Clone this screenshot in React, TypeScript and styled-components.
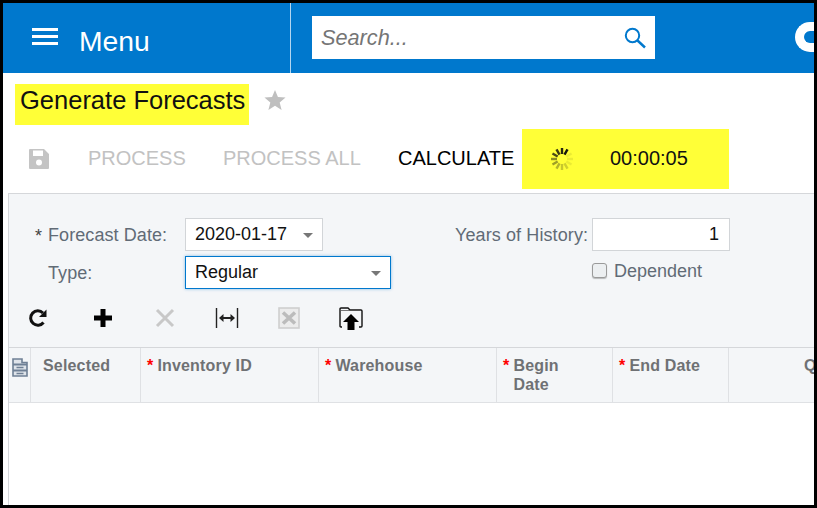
import styled, { createGlobalStyle } from "styled-components";

const GlobalStyle = createGlobalStyle`
  html, body {
    margin: 0;
    padding: 0;
    background: #000;
  }
  * {
    box-sizing: border-box;
  }
`;

const spinnerTicks = Array.from({ length: 12 }, (_, i) => i);

const App = () => {
  return (
    <Style.Frame>
      <GlobalStyle />
      <Style.Header>
        <Style.MenuSection>
          <Style.Burger>
            <span />
            <span />
            <span />
          </Style.Burger>
          <Style.MenuText>Menu</Style.MenuText>
        </Style.MenuSection>
        <Style.SearchSection>
          <Style.SearchBox>
            <Style.SearchText>Search...</Style.SearchText>
            <svg width="22" height="22" viewBox="0 0 22 22" fill="none">
              <circle cx="8.5" cy="8.5" r="6.7" stroke="#0078cd" strokeWidth="2" />
              <path d="M13.5 13.5L21 20.5" stroke="#0078cd" strokeWidth="2.4" />
            </svg>
          </Style.SearchBox>
        </Style.SearchSection>
        <Style.Logo />
      </Style.Header>

      <Style.TitleRow>
        <Style.Title>Generate Forecasts</Style.Title>
        <Style.Star width="22" height="22" viewBox="0 0 24 23">
          <path
            d="M12 0.5L15.2 8.2L23.5 8.8L17.1 14.1L19.2 22.3L12 17.8L4.8 22.3L6.9 14.1L0.5 8.8L8.8 8.2Z"
            fill="#bfbfbf"
          />
        </Style.Star>
      </Style.TitleRow>

      <Style.ActionBar>
        <Style.SaveSlot>
          <svg width="20" height="20" viewBox="0 0 20 20">
            <path
              fillRule="evenodd"
              d="M1 0H15L20 5V19Q20 20 19 20H1Q0 20 0 19V1Q0 0 1 0ZM4 1.5V7H14V1.5ZM10 10.5A3 3 0 1 0 10 16.5A3 3 0 1 0 10 10.5Z"
              fill="#c4c4c4"
            />
          </svg>
        </Style.SaveSlot>
        <Style.ActionText $disabled $width={135}>PROCESS</Style.ActionText>
        <Style.ActionText $disabled $width={175}>PROCESS ALL</Style.ActionText>
        <Style.ActionText $width={124}>CALCULATE</Style.ActionText>
        <Style.TimerBox>
          <svg width="26" height="26" viewBox="0 0 26 26">
            {spinnerTicks.map((i) => (
              <line
                key={i}
                x1="13"
                y1="2"
                x2="13"
                y2="8"
                stroke={i > 3 && i < 8 ? "#55551a" : "#14140c"}
                strokeWidth="2.4"
                opacity={i < 4 ? 1 - i * 0.08 : Math.max(0.08, 0.8 - (i - 3) * 0.12)}
                transform={`rotate(${30 - i * 30} 13 13)`}
              />
            ))}
          </svg>
          <Style.Timer>00:00:05</Style.Timer>
        </Style.TimerBox>
      </Style.ActionBar>

      <Style.Panel>
        <Style.Form>
          <Style.FormLeft>
            <Style.FieldRow>
              <Style.Label $required>Forecast Date:</Style.Label>
              <Style.Select $width={138}>
                <span>2020-01-17</span>
                <Style.Caret />
              </Style.Select>
            </Style.FieldRow>
            <Style.FieldRow>
              <Style.Label>Type:</Style.Label>
              <Style.Select $width={206} $focused>
                <span>Regular</span>
                <Style.Caret />
              </Style.Select>
            </Style.FieldRow>
          </Style.FormLeft>
          <Style.FormRight>
            <Style.FieldRow>
              <Style.RightLabel>Years of History:</Style.RightLabel>
              <Style.NumberInput>1</Style.NumberInput>
            </Style.FieldRow>
            <Style.CheckRow>
              <Style.CheckBox />
              <Style.CheckLabel>Dependent</Style.CheckLabel>
            </Style.CheckRow>
          </Style.FormRight>
        </Style.Form>

        <Style.GridToolbar>
          <Style.ToolButton>
            <svg width="22" height="22" viewBox="0 0 22 22" fill="none" style={{ marginLeft: -6 }}>
              <path
                d="M16.5 15.5A7.2 7.2 0 1 1 16 6"
                stroke="#111"
                strokeWidth="3"
              />
              <path d="M19.5 2.5V10H12Z" fill="#111" />
            </svg>
          </Style.ToolButton>
          <Style.ToolButton>
            <svg width="18" height="18" viewBox="0 0 18 18">
              <path d="M6.5 0H11.5V6.5H18V11.5H11.5V18H6.5V11.5H0V6.5H6.5Z" fill="#000" />
            </svg>
          </Style.ToolButton>
          <Style.ToolButton>
            <svg width="20" height="20" viewBox="0 0 20 20">
              <path d="M2 2L18 18M18 2L2 18" stroke="#c8c8c8" strokeWidth="3" />
            </svg>
          </Style.ToolButton>
          <Style.ToolButton>
            <svg width="24" height="20" viewBox="0 0 24 20" fill="none">
              <path d="M1.5 0V20M22.5 0V20" stroke="#222" strokeWidth="1.4" />
              <path d="M7 10H17" stroke="#222" strokeWidth="2" />
              <path d="M4 10L8.5 6V14ZM20 10L15.5 6V14Z" fill="#222" />
            </svg>
          </Style.ToolButton>
          <Style.ToolButton>
            <svg width="22" height="22" viewBox="0 0 22 22" fill="none">
              <rect x="1" y="1" width="20" height="20" fill="#ececec" stroke="#cfcfcf" strokeWidth="1.6" />
              <path d="M5 5.5L17 16.5M17 5.5L5 16.5" stroke="#bcbcbc" strokeWidth="3.6" />
            </svg>
          </Style.ToolButton>
          <Style.ToolButton>
            <svg width="24" height="25" viewBox="0 0 24 25" fill="none">
              <path
                d="M3 21H2Q1 21 1 20V3Q1 2 2 2H9L11 4H22Q23 4 23 5V20Q23 21 22 21H20"
                stroke="#111"
                strokeWidth="1.4"
              />
              <path d="M2 4.5H22" stroke="#555" strokeWidth="0.8" />
              <path d="M12 8L20 16H15.5V24H8.5V16H4Z" fill="#000" />
            </svg>
          </Style.ToolButton>
        </Style.GridToolbar>

        <Style.GridHeader>
          <Style.IconCell>
            <svg width="16" height="19" viewBox="0 0 16 19" fill="none">
              <path d="M1 1H10V4.5H15V18H1Z" fill="#dfe4ea" stroke="#6f8095" strokeWidth="1.6" />
              <path d="M1 6.5H15M1 12.5H15" stroke="#6f8095" strokeWidth="2" />
              <path d="M4.5 9.5H11.5M4.5 15.5H11.5" stroke="#6f8095" strokeWidth="1.4" />
            </svg>
          </Style.IconCell>
          <Style.HeaderCell $width={110}>
            <Style.PlainHeading>Selected</Style.PlainHeading>
          </Style.HeaderCell>
          <Style.HeaderCell $width={178}>
            <Style.RequiredMark>*</Style.RequiredMark>
            <span>Inventory ID</span>
          </Style.HeaderCell>
          <Style.HeaderCell $width={178}>
            <Style.RequiredMark>*</Style.RequiredMark>
            <span>Warehouse</span>
          </Style.HeaderCell>
          <Style.HeaderCell $width={116}>
            <Style.RequiredMark>*</Style.RequiredMark>
            <span>
              Begin
              <br />
              Date
            </span>
          </Style.HeaderCell>
          <Style.HeaderCell $width={116}>
            <Style.RequiredMark>*</Style.RequiredMark>
            <span>End Date</span>
          </Style.HeaderCell>
          <Style.LastHeaderCell>Q</Style.LastHeaderCell>
        </Style.GridHeader>
      </Style.Panel>
    </Style.Frame>
  );
};

export default App;

const FONT = `"Liberation Sans", Arial, sans-serif`;

const Style = {
  Frame: styled.div`
    width: 817px;
    height: 508px;
    border: 3px solid #000;
    background: #fff;
    overflow: hidden;
    font-family: ${FONT};
  `,
  Header: styled.header`
    display: flex;
    height: 70px;
    background: #0078cd;
  `,
  MenuSection: styled.div`
    display: flex;
    align-items: center;
    gap: 21px;
    width: 288px;
    padding: 0 0 0 29px;
    border-right: 1px solid #b3d6f0;
  `,
  Burger: styled.div`
    display: flex;
    flex-direction: column;
    gap: 4px;
    width: 26px;
    margin-top: -3px;

    span {
      display: block;
      height: 3px;
      background: #fff;
    }
  `,
  MenuText: styled.div`
    color: #fff;
    font-size: 28.3px;
    line-height: 32px;
    margin-top: 6px;
  `,
  SearchSection: styled.div`
    flex: 1;
    padding: 13px 0 0 21px;
  `,
  SearchBox: styled.div`
    display: flex;
    align-items: center;
    justify-content: space-between;
    width: 343px;
    height: 43px;
    padding: 0 9px 0 9px;
    background: #fff;
  `,
  SearchText: styled.span`
    color: #757575;
    font-size: 21.7px;
    font-style: italic;
  `,
  Logo: styled.div`
    flex-shrink: 0;
    width: 19px;
    height: 30px;
    margin-top: 19px;
    border: 9px solid #fff;
    border-right: 0;
    border-radius: 15px 0 0 15px;
  `,
  TitleRow: styled.div`
    display: flex;
    align-items: center;
    gap: 15px;
    height: 56px;
    padding: 0 0 0 12px;
  `,
  Title: styled.h1`
    display: flex;
    align-items: center;
    width: 234px;
    height: 41px;
    margin: 7px 0 0;
    padding: 0 0 8px 5px;
    background: #ffff37;
    color: #111;
    font-size: 25.5px;
    font-weight: 400;
    white-space: nowrap;
  `,
  Star: styled.svg`
    margin-top: -2px;
  `,
  ActionBar: styled.div`
    display: flex;
    align-items: center;
    height: 60px;
  `,
  SaveSlot: styled.div`
    display: flex;
    align-items: center;
    width: 85px;
    padding-left: 26px;
  `,
  ActionText: styled.div<{ $disabled?: boolean; $width: number }>`
    width: ${(props) => props.$width}px;
    color: ${(props) => (props.$disabled ? "#c2c2c2" : "#000")};
    font-size: 20px;
    margin-top: -1px;
    white-space: nowrap;
  `,
  TimerBox: styled.div`
    display: flex;
    align-items: center;
    gap: 35px;
    width: 207px;
    height: 60px;
    padding-left: 27px;
    background: #ffff37;
  `,
  Timer: styled.div`
    color: #111;
    font-size: 20px;
    margin-top: -1px;
  `,
  Panel: styled.section`
    height: 312px;
    margin: 4px 0 0 5px;
    border-left: 1px solid #d5d7da;
    border-top: 1px solid #d5d7da;
  `,
  Form: styled.div`
    display: flex;
    height: 106px;
    padding-top: 24px;
    background: #f4f6f8;
  `,
  FormLeft: styled.div`
    display: flex;
    flex-direction: column;
    gap: 5px;
    width: 446px;
  `,
  FormRight: styled.div`
    display: flex;
    flex-direction: column;
    gap: 5px;
  `,
  FieldRow: styled.div`
    display: flex;
    align-items: center;
    height: 33px;
  `,
  Label: styled.label<{ $required?: boolean }>`
    position: relative;
    width: 176px;
    padding-left: 39px;
    color: #616b76;
    font-size: 18px;
    letter-spacing: 0.08px;
    margin-top: 1px;

    &::before {
      content: ${(props) => (props.$required ? '"*"' : "none")};
      position: absolute;
      left: 26px;
      top: 1px;
      color: #444;
      font-size: 18px;
    }
  `,
  RightLabel: styled.label`
    width: 137px;
    color: #616b76;
    font-size: 18px;
    letter-spacing: 0.1px;
    margin-top: 1px;
    white-space: nowrap;
  `,
  Select: styled.div<{ $width: number; $focused?: boolean }>`
    display: flex;
    align-items: center;
    justify-content: space-between;
    width: ${(props) => props.$width}px;
    height: 33px;
    padding: 0 9px 0 9px;
    background: #fff;
    border: 1px solid ${(props) => (props.$focused ? "#0078cd" : "#d2d5d8")};
    box-shadow: ${(props) =>
      props.$focused ? "0 0 3px rgba(0, 120, 205, 0.45)" : "none"};
    color: #111;
    font-size: 18px;
  `,
  Caret: styled.i`
    width: 0;
    height: 0;
    border-left: 5.5px solid transparent;
    border-right: 5.5px solid transparent;
    border-top: 5px solid #777;
    margin-top: 2px;
  `,
  NumberInput: styled.div`
    width: 138px;
    height: 33px;
    padding-right: 10px;
    background: #fff;
    border: 1px solid #d2d5d8;
    color: #111;
    font-size: 18px;
    line-height: 31px;
    text-align: right;
  `,
  CheckRow: styled.div`
    display: flex;
    align-items: center;
    gap: 7px;
    height: 33px;
    margin-left: 137px;
  `,
  CheckBox: styled.span`
    width: 15px;
    height: 15px;
    margin-top: -4px;
    border: 1px solid #9a9a9a;
    border-radius: 3px;
    background: #eceff1;
    box-shadow: 0 1px 1px rgba(0, 0, 0, 0.25);
  `,
  CheckLabel: styled.span`
    color: #616b76;
    font-size: 18px;
    margin-top: -2px;
  `,
  GridToolbar: styled.div`
    display: flex;
    align-items: center;
    gap: 32px;
    height: 47px;
    padding: 0 0 0 17px;
    background: #f4f6f8;
  `,
  ToolButton: styled.div`
    display: flex;
    align-items: center;
    justify-content: center;
    width: 30px;
    height: 30px;
    margin-top: -11px;
  `,
  GridHeader: styled.div`
    display: flex;
    height: 56px;
    background: #f4f6f8;
    border-top: 1px solid #d5d7da;
    border-bottom: 1px solid #dfe1e4;
  `,
  IconCell: styled.div`
    display: flex;
    justify-content: center;
    flex-shrink: 0;
    width: 22px;
    padding-top: 10px;
    border-right: 1px solid #dfe1e4;
  `,
  HeaderCell: styled.div<{ $width: number }>`
    display: flex;
    flex-shrink: 0;
    gap: 4px;
    width: ${(props) => props.$width}px;
    padding: 8px 0 0 6px;
    border-right: 1px solid #dfe1e4;
    color: #6f7174;
    font-size: 16px;
    font-weight: 700;
    letter-spacing: 0.17px;
    line-height: 19px;
  `,
  PlainHeading: styled.span`
    margin-left: 6px;
  `,
  RequiredMark: styled.span`
    color: #f00;
  `,
  LastHeaderCell: styled.div`
    flex-shrink: 0;
    width: 120px;
    padding: 8px 0 0 75px;
    color: #6f7174;
    font-size: 16px;
    font-weight: 700;
    line-height: 19px;
  `,
};
